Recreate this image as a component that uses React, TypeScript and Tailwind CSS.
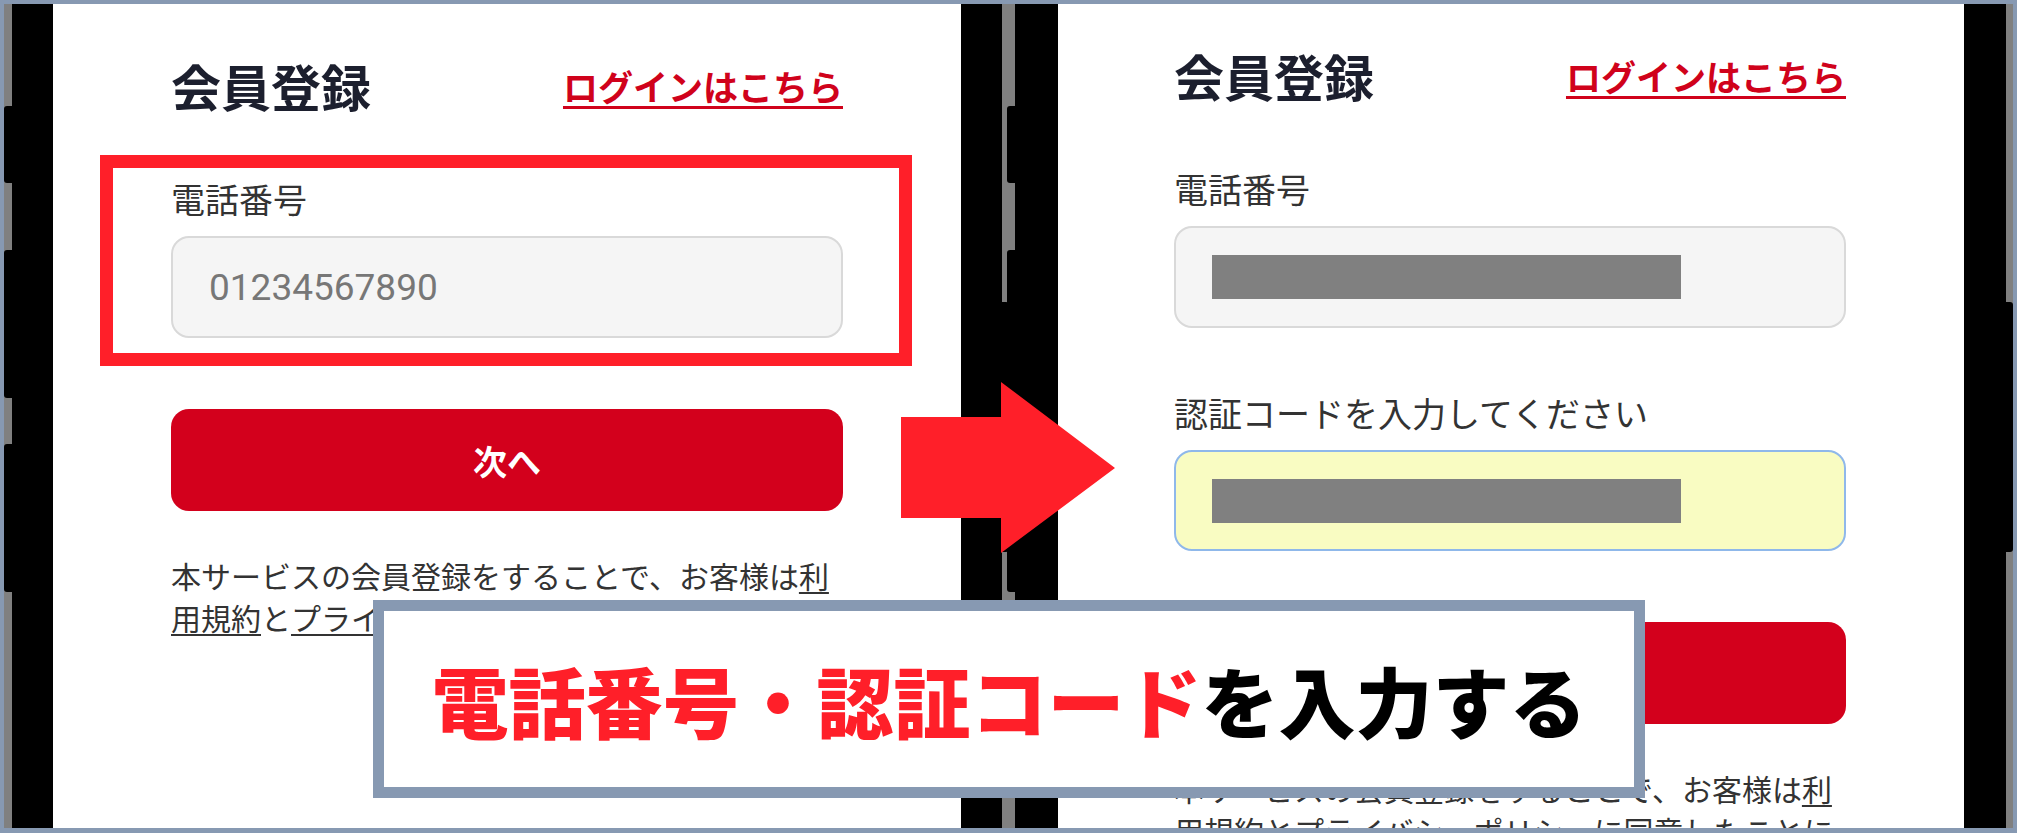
import React from "react";

function PhoneFrame({ side, children }: { side: "left" | "right"; children: React.ReactNode }) {
  return (
    <div
      className={
        side === "left"
          ? "relative flex h-full w-[990px] bg-black px-[41px]"
          : "relative flex h-full w-[991px] bg-black pl-[43px] pr-[42px]"
      }
    >
      {/* side buttons */}
      <div className="absolute left-[-8px] top-[102px] h-[77px] w-[8px] rounded-l-[3px] bg-black" />
      <div className="absolute left-[-8px] top-[246px] h-[148px] w-[8px] rounded-l-[3px] bg-black" />
      <div className="absolute left-[-8px] top-[440px] h-[148px] w-[8px] rounded-l-[3px] bg-black" />
      <div className="absolute right-[-7px] top-[298px] h-[250px] w-[7px] rounded-r-[3px] bg-black" />
      <div className="h-full flex-1 overflow-hidden bg-white">{children}</div>
    </div>
  );
}

function Field({ label, yellow, placeholder }: { label: string; yellow?: boolean; placeholder?: string }) {
  return (
    <div>
      <div className="text-[34px] leading-none text-[#333333]">{label}</div>
      <div
        className={
          yellow
            ? "mt-[20px] flex h-[101px] items-center rounded-[18px] border-2 border-[#8fb8ea] bg-[#f9fcc2] px-[36px]"
            : "mt-[20px] flex h-[102px] items-center rounded-[18px] border-2 border-[#d9d9d9] bg-[#f5f5f5] px-[36px]"
        }
      >
        {placeholder ? (
          <span className="font-['Roboto'] text-[37px] leading-none text-[#777777]">{placeholder}</span>
        ) : (
          <div className="h-[44px] w-[469px] bg-[#808080]" />
        )}
      </div>
    </div>
  );
}

function SignupScreen({ step }: { step: 1 | 2 }) {
  return (
    <div
      className={
        step === 1
          ? "pl-[118px] pr-[118px] pt-[56px] font-['Noto_Sans_CJK_JP',sans-serif]"
          : "pl-[116px] pr-[118px] pt-[46px] font-['Noto_Sans_CJK_JP',sans-serif]"
      }
    >
      <div className="flex h-[50px] items-center justify-between">
        <h1 className="text-[50px] font-bold leading-none text-[#1c1f2e]">会員登録</h1>
        <a className="text-[35px] font-bold leading-none text-[#d0021b] underline decoration-[3px] underline-offset-[5px]">
          ログインはこちら
        </a>
      </div>

      <div className="mt-[72px]">
        <Field label="電話番号" placeholder={step === 1 ? "01234567890" : undefined} />
      </div>

      {step === 2 && (
        <div className="mt-[68px]">
          <Field label="認証コードを入力してください" yellow />
        </div>
      )}

      <button className="mt-[71px] flex h-[102px] w-full items-center justify-center rounded-[18px] bg-[#d3001c] text-[34px] font-bold text-white">
        次へ
      </button>

      <p
        className={
          step === 1
            ? "mt-[43px] line-clamp-2 text-[30px] leading-[42px] text-[#333333]"
            : "mt-[43px] text-[30px] leading-[42px] text-[#333333]"
        }
      >
        本サービスの会員登録をすることで、お客様は
        <span className="underline decoration-2 underline-offset-[4px]">利用規約</span>と
        <span className="underline decoration-2 underline-offset-[4px]">プライバシーポリシー</span>
        に同意したことになります。
      </p>
    </div>
  );
}

export default function App() {
  return (
    <div className="relative h-[833px] w-[2017px] overflow-hidden bg-[#8799b2] px-[4px] pb-[5px] pt-[4px]">
      <div className="flex h-full gap-[13px] bg-[#808080] pl-[8px] pr-[7px]">
        <PhoneFrame side="left">
          <SignupScreen step={1} />
        </PhoneFrame>
        <PhoneFrame side="right">
          <SignupScreen step={2} />
        </PhoneFrame>
      </div>

      {/* highlight around phone number field */}
      <div className="absolute left-[100px] top-[155px] h-[211px] w-[812px] border-[13px] border-[#ff1f29]" />

      {/* arrow */}
      <svg className="absolute left-[901px] top-[382px]" width="214" height="171" viewBox="0 0 214 171">
        <polygon points="0,35 100,35 100,0 214,86 100,171 100,136 0,136" fill="#ff1f29" />
      </svg>

      {/* caption */}
      <div className="absolute left-[373px] top-[600px] flex h-[198px] w-[1272px] items-center justify-center border-[11px] border-[#8799b2] bg-white">
        <span className="whitespace-nowrap font-['Noto_Sans_CJK_JP',sans-serif] text-[77px] font-black leading-none">
          <span className="text-[#ff1f29]">電話番号・認証コード</span>
          <span className="text-black">を入力する</span>
        </span>
      </div>
    </div>
  );
}
